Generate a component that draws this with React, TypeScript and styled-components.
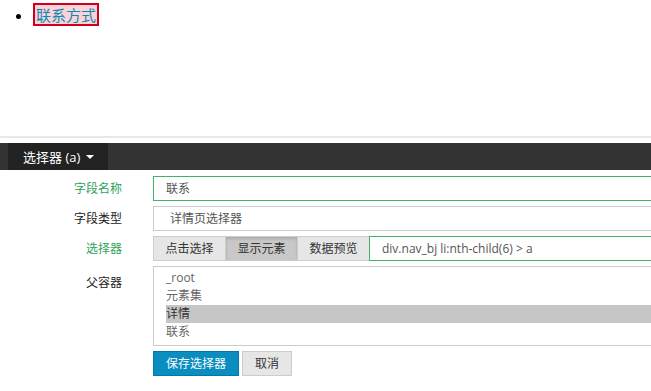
import React from 'react';
import styled, { createGlobalStyle } from 'styled-components';

const GlobalStyle = createGlobalStyle`
  html, body {
    margin: 0;
    padding: 0;
    background: #fff;
    font-family: "Open Sans", "Noto Sans CJK SC", sans-serif;
    overflow: hidden;
  }
`;

const Page = styled.div`
  width: 651px;
  height: 391px;
  overflow: hidden;
  display: flex;
  flex-direction: column;
`;

const Preview = styled.div`
  height: 138px;
  flex-shrink: 0;
  box-sizing: border-box;
  border-bottom: 2px solid #e8e8e8;

  ul {
    margin: 0;
    padding: 3px 0 0 33px;
    list-style: disc;
    font-size: 15px;
    line-height: 19px;
  }
`;

const MarkedLink = styled.a`
  display: inline-block;
  color: #0a8ab8;
  text-decoration: none;
  background: #f9d3d7;
  border: 2px solid #d0001c;
  padding: 0 1px;
  font-family: "Noto Sans CJK SC", sans-serif;
`;

const Panel = styled.div`
  padding-top: 5px;
  width: 760px;
`;

const Toolbar = styled.div`
  height: 27px;
  background: #333;
  padding-left: 8px;
  display: flex;
`;

const Tab = styled.div`
  width: 100px;
  box-sizing: border-box;
  background: #222;
  color: #fff;
  font-size: 13px;
  padding-left: 15px;
  display: flex;
  align-items: center;
  gap: 4px;

  .caret {
    width: 0;
    height: 0;
    border-left: 4px solid transparent;
    border-right: 4px solid transparent;
    border-top: 4px solid #fff;
    margin-left: 2px;
  }
`;

const Form = styled.div`
  margin-top: 6px;
  display: grid;
  grid-template-columns: 122px 1fr;
  column-gap: 31px;
  row-gap: 5px;
  font-size: 12px;
`;

const Label = styled.div<{ $active?: boolean; $top?: boolean }>`
  text-align: right;
  line-height: 25px;
  color: ${(p) => (p.$active ? '#2ea35a' : '#222')};
  padding-top: ${(p) => (p.$top ? '4px' : '0')};
`;

const TextBox = styled.div<{ $focus?: boolean; $indent?: number }>`
  height: 25px;
  box-sizing: border-box;
  border: 1px solid ${(p) => (p.$focus ? '#43b16a' : '#cccccc')};
  color: #555;
  line-height: 23px;
  padding-left: ${(p) => p.$indent ?? 12}px;
  flex: 1;
`;

const ButtonGroup = styled.div`
  display: flex;
  height: 25px;
`;

const GroupButton = styled.div<{ $pressed?: boolean }>`
  width: 72px;
  box-sizing: border-box;
  border: 1px solid #cccccc;
  border-right: none;
  background: ${(p) => (p.$pressed ? '#c8c8c8' : '#e6e6e6')};
  box-shadow: ${(p) => (p.$pressed ? 'inset 0 2px 3px rgba(0,0,0,0.15)' : 'none')};
  color: #333;
  line-height: 23px;
  text-align: center;
`;

const SelectorInput = styled(TextBox)`
  font-family: "Open Sans", sans-serif;
  font-size: 12px;
`;

const ParentList = styled.div`
  height: 80px;
  box-sizing: border-box;
  border: 1px solid #cccccc;
  padding: 2px 0 0 12px;
  color: #666;
`;

const ParentItem = styled.div<{ $selected?: boolean }>`
  line-height: 18px;
  background: ${(p) => (p.$selected ? '#c6c6c6' : 'transparent')};
  color: ${(p) => (p.$selected ? '#333' : '#666')};
`;

const Actions = styled.div`
  display: flex;
  gap: 3px;
`;

const ActionButton = styled.div<{ $primary?: boolean }>`
  height: 25px;
  box-sizing: border-box;
  padding: 0 12px;
  line-height: 23px;
  border: 1px solid ${(p) => (p.$primary ? '#0079a8' : '#cccccc')};
  background: ${(p) => (p.$primary ? '#0a8dbf' : '#e6e6e6')};
  color: ${(p) => (p.$primary ? '#fff' : '#333')};
`;

const parents = ['_root', '元素集', '详情', '联系'];

const App: React.FC = () => {
  return (
    <Page>
      <GlobalStyle />
      <Preview>
        <ul>
          <li>
            <MarkedLink href="#">联系方式</MarkedLink>
          </li>
        </ul>
      </Preview>
      <Panel>
        <Toolbar>
          <Tab>
            选择器 (a)<span className="caret"></span>
          </Tab>
        </Toolbar>
        <Form>
          <Label $active>字段名称</Label>
          <TextBox $focus>联系</TextBox>

          <Label>字段类型</Label>
          <TextBox $indent={16}>详情页选择器</TextBox>

          <Label $active>选择器</Label>
          <ButtonGroup>
            <GroupButton>点击选择</GroupButton>
            <GroupButton $pressed>显示元素</GroupButton>
            <GroupButton>数据预览</GroupButton>
            <SelectorInput $focus>div.nav_bj li:nth-child(6) &gt; a</SelectorInput>
          </ButtonGroup>

          <Label $top>父容器</Label>
          <ParentList>
            {parents.map((item) => (
              <ParentItem key={item} $selected={item === '详情'}>
                {item}
              </ParentItem>
            ))}
          </ParentList>

          <div></div>
          <Actions>
            <ActionButton $primary>保存选择器</ActionButton>
            <ActionButton>取消</ActionButton>
          </Actions>
        </Form>
      </Panel>
    </Page>
  );
};

export default App;
